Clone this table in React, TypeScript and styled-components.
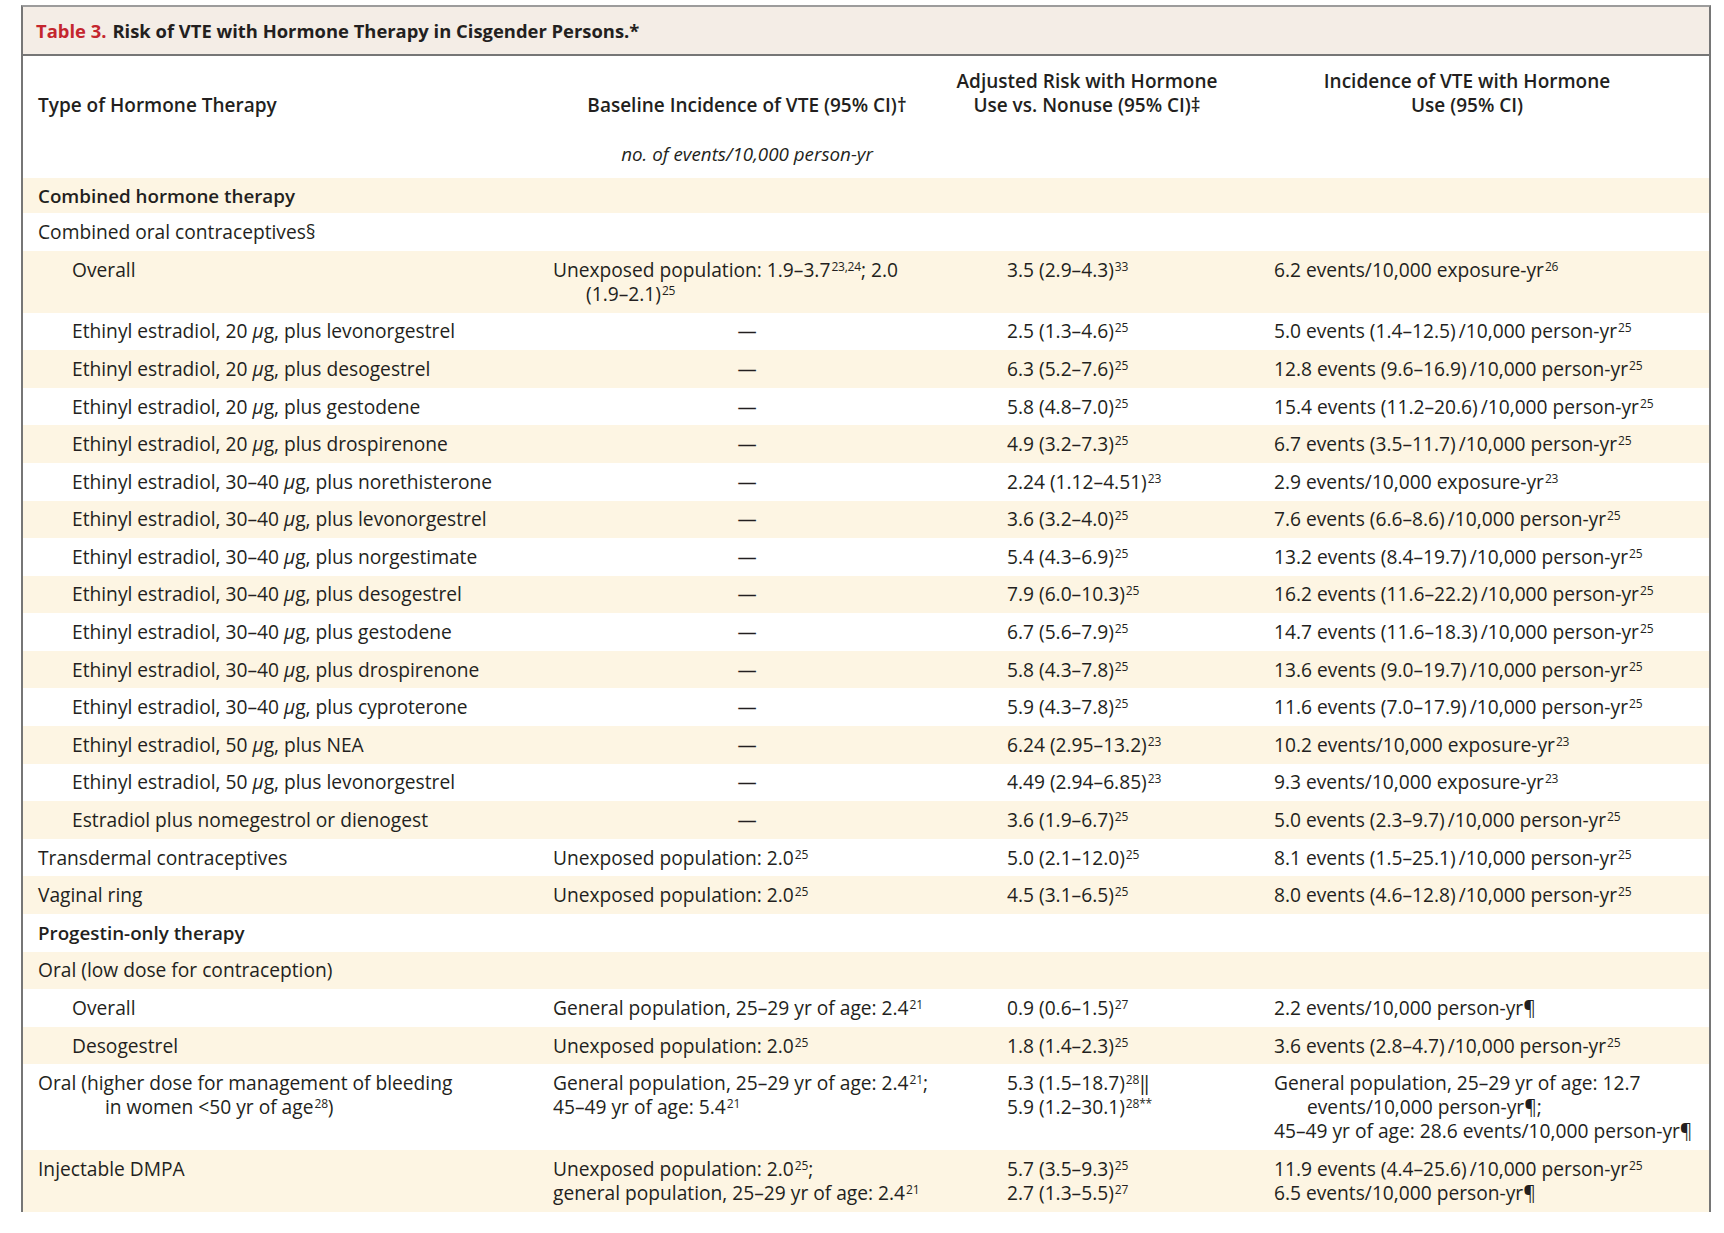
import React from "react";
import styled, { createGlobalStyle } from "styled-components";

const GlobalStyle = createGlobalStyle`
  html, body {
    margin: 0;
    padding: 0;
    background: #ffffff;
  }
  body {
    font-family: "Open Sans", "Noto Sans", "Liberation Sans", sans-serif;
    color: #231f20;
  }
`;

const COLS = "522px 404px 276px 484px";
const INK = "#231f20";

const Page = styled.div`
  padding: 5px 0 0 21px;
`;

const Frame = styled.section`
  width: 1690px;
  box-sizing: border-box;
  border-top: 2px solid #9c9c9c;
  border-left: 2px solid #767676;
  border-right: 2px solid #767676;
`;

const TitleBar = styled.header`
  height: 47px;
  background: #f4ede6;
  border-bottom: 2px solid #767676;
  display: flex;
  align-items: center;
  padding-left: 13px;
  font-size: 18.4px;
  font-weight: 700;
  color: ${INK};
  white-space: nowrap;
`;

const TableNo = styled.span`
  color: #c4262e;
  margin-right: 6px;
`;

const HeaderRow = styled.div`
  display: grid;
  grid-template-columns: ${COLS};
  padding: 12.8px 0 12.4px;
  font-size: 19px;
  font-weight: 600;
  line-height: 24px;
`;

const HeadCell = styled.div<{ $center?: boolean; $bottom?: boolean }>`
  text-align: ${(p) => (p.$center ? "center" : "left")};
  padding-left: ${(p) => (p.$center ? 0 : 15)}px;
  align-self: ${(p) => (p.$bottom ? "end" : "start")};
  white-space: nowrap;
`;

const UnitsRow = styled.div`
  display: grid;
  grid-template-columns: ${COLS};
  padding: 12.4px 0;
  line-height: 24px;
`;

const UnitsCell = styled.div`
  grid-column: 2;
  text-align: center;
  font-style: italic;
  font-size: 18.8px;
`;

const Body = styled.div`
  font-size: 19.2px;
  line-height: 24px;
`;

const Row = styled.div<{ $band: boolean; $compact?: boolean }>`
  display: grid;
  grid-template-columns: ${COLS};
  padding: ${(p) => (p.$compact ? "5.7px 0" : "6.8px 0")};
  background: ${(p) => (p.$band ? "#fdf5e3" : "#ffffff")};
`;

const LabelCell = styled.div<{ $level: number; $bold?: boolean; $hang: number }>`
  padding-left: ${(p) => (p.$level ? 49 : 15) + p.$hang}px;
  text-indent: -${(p) => p.$hang}px;
  font-size: ${(p) => (p.$bold ? "18.8px" : "19.2px")};
  font-weight: ${(p) => (p.$bold ? 600 : 400)};
  white-space: nowrap;
`;

const ValueCell = styled.div<{ $inset: number; $center?: boolean }>`
  padding-left: ${(p) => (p.$center ? 0 : p.$inset)}px;
  text-align: ${(p) => (p.$center ? "center" : "left")};
`;

const Para = styled.div<{ $hang: number }>`
  padding-left: ${(p) => p.$hang}px;
  text-indent: -${(p) => p.$hang}px;
  white-space: nowrap;
`;

const Sup = styled.span`
  font-size: 12px;
  line-height: 0;
  vertical-align: 6px;
  letter-spacing: -0.2px;
  margin-left: 1px;
`;

const Mu = styled.span`
  font-style: italic;
`;

const Slash = styled.span`
  margin-left: 3px;
`;

const s = (n: string) => <Sup>{n}</Sup>;
const mu = <Mu>μ</Mu>;
const sl = <Slash>/</Slash>;

type Cell = React.ReactNode[] | "dash" | undefined;

interface RowData {
  label: React.ReactNode;
  level: 0 | 1;
  bold?: boolean;
  hang?: number;
  compact?: boolean;
  base?: Cell;
  risk?: Cell;
  inc?: Cell;
}

const ee = (dose: string, partner: string) => (
  <>
    Ethinyl estradiol, {dose} {mu}g, plus {partner}
  </>
);

const ev = (n: string, ci: string, sup: string) => (
  <>
    {n} events ({ci}){sl}10,000 person-yr{s(sup)}
  </>
);

const rows: RowData[] = [
  { label: "Combined hormone therapy", level: 0, bold: true, compact: true },
  { label: "Combined oral contraceptives§", level: 0 },
  {
    label: "Overall",
    level: 1,
    base: [
      <>
        Unexposed population: 1.9–3.7{s("23,24")}; 2.0
        <br />
        (1.9–2.1){s("25")}
      </>,
    ],
    risk: [<>3.5 (2.9–4.3){s("33")}</>],
    inc: [<>6.2 events/10,000 exposure-yr{s("26")}</>],
  },
  {
    label: ee("20", "levonorgestrel"),
    level: 1,
    base: "dash",
    risk: [<>2.5 (1.3–4.6){s("25")}</>],
    inc: [ev("5.0", "1.4–12.5", "25")],
  },
  {
    label: ee("20", "desogestrel"),
    level: 1,
    base: "dash",
    risk: [<>6.3 (5.2–7.6){s("25")}</>],
    inc: [ev("12.8", "9.6–16.9", "25")],
  },
  {
    label: ee("20", "gestodene"),
    level: 1,
    base: "dash",
    risk: [<>5.8 (4.8–7.0){s("25")}</>],
    inc: [ev("15.4", "11.2–20.6", "25")],
  },
  {
    label: ee("20", "drospirenone"),
    level: 1,
    base: "dash",
    risk: [<>4.9 (3.2–7.3){s("25")}</>],
    inc: [ev("6.7", "3.5–11.7", "25")],
  },
  {
    label: ee("30–40", "norethisterone"),
    level: 1,
    base: "dash",
    risk: [<>2.24 (1.12–4.51){s("23")}</>],
    inc: [<>2.9 events/10,000 exposure-yr{s("23")}</>],
  },
  {
    label: ee("30–40", "levonorgestrel"),
    level: 1,
    base: "dash",
    risk: [<>3.6 (3.2–4.0){s("25")}</>],
    inc: [ev("7.6", "6.6–8.6", "25")],
  },
  {
    label: ee("30–40", "norgestimate"),
    level: 1,
    base: "dash",
    risk: [<>5.4 (4.3–6.9){s("25")}</>],
    inc: [ev("13.2", "8.4–19.7", "25")],
  },
  {
    label: ee("30–40", "desogestrel"),
    level: 1,
    base: "dash",
    risk: [<>7.9 (6.0–10.3){s("25")}</>],
    inc: [ev("16.2", "11.6–22.2", "25")],
  },
  {
    label: ee("30–40", "gestodene"),
    level: 1,
    base: "dash",
    risk: [<>6.7 (5.6–7.9){s("25")}</>],
    inc: [ev("14.7", "11.6–18.3", "25")],
  },
  {
    label: ee("30–40", "drospirenone"),
    level: 1,
    base: "dash",
    risk: [<>5.8 (4.3–7.8){s("25")}</>],
    inc: [ev("13.6", "9.0–19.7", "25")],
  },
  {
    label: ee("30–40", "cyproterone"),
    level: 1,
    base: "dash",
    risk: [<>5.9 (4.3–7.8){s("25")}</>],
    inc: [ev("11.6", "7.0–17.9", "25")],
  },
  {
    label: ee("50", "NEA"),
    level: 1,
    base: "dash",
    risk: [<>6.24 (2.95–13.2){s("23")}</>],
    inc: [<>10.2 events/10,000 exposure-yr{s("23")}</>],
  },
  {
    label: ee("50", "levonorgestrel"),
    level: 1,
    base: "dash",
    risk: [<>4.49 (2.94–6.85){s("23")}</>],
    inc: [<>9.3 events/10,000 exposure-yr{s("23")}</>],
  },
  {
    label: "Estradiol plus nomegestrol or dienogest",
    level: 1,
    base: "dash",
    risk: [<>3.6 (1.9–6.7){s("25")}</>],
    inc: [ev("5.0", "2.3–9.7", "25")],
  },
  {
    label: "Transdermal contraceptives",
    level: 0,
    base: [<>Unexposed population: 2.0{s("25")}</>],
    risk: [<>5.0 (2.1–12.0){s("25")}</>],
    inc: [ev("8.1", "1.5–25.1", "25")],
  },
  {
    label: "Vaginal ring",
    level: 0,
    base: [<>Unexposed population: 2.0{s("25")}</>],
    risk: [<>4.5 (3.1–6.5){s("25")}</>],
    inc: [ev("8.0", "4.6–12.8", "25")],
  },
  { label: "Progestin-only therapy", level: 0, bold: true },
  { label: "Oral (low dose for contraception)", level: 0 },
  {
    label: "Overall",
    level: 1,
    base: [<>General population, 25–29 yr of age: 2.4{s("21")}</>],
    risk: [<>0.9 (0.6–1.5){s("27")}</>],
    inc: [<>2.2 events/10,000 person-yr¶</>],
  },
  {
    label: "Desogestrel",
    level: 1,
    base: [<>Unexposed population: 2.0{s("25")}</>],
    risk: [<>1.8 (1.4–2.3){s("25")}</>],
    inc: [ev("3.6", "2.8–4.7", "25")],
  },
  {
    label: (
      <>
        Oral (higher dose for management of bleeding
        <br />
        in women &lt;50 yr of age{s("28")})
      </>
    ),
    level: 0,
    hang: 67,
    base: [
      <>General population, 25–29 yr of age: 2.4{s("21")};</>,
      <>45–49 yr of age: 5.4{s("21")}</>,
    ],
    risk: [<>5.3 (1.5–18.7){s("28")}‖</>, <>5.9 (1.2–30.1){s("28**")}</>],
    inc: [
      <>
        General population, 25–29 yr of age: 12.7
        <br />
        events/10,000 person-yr¶;
      </>,
      <>45–49 yr of age: 28.6 events/10,000 person-yr¶</>,
    ],
  },
  {
    label: "Injectable DMPA",
    level: 0,
    base: [
      <>Unexposed population: 2.0{s("25")};</>,
      <>general population, 25–29 yr of age: 2.4{s("21")}</>,
    ],
    risk: [<>5.7 (3.5–9.3){s("25")}</>, <>2.7 (1.3–5.5){s("27")}</>],
    inc: [ev("11.9", "4.4–25.6", "25"), <>6.5 events/10,000 person-yr¶</>],
  },
];

function Value({ cell, inset, hang }: { cell: Cell; inset: number; hang: number }) {
  if (cell === "dash") {
    return (
      <ValueCell $inset={inset} $center>
        —
      </ValueCell>
    );
  }
  return (
    <ValueCell $inset={inset}>
      {(cell ?? []).map((p, i) => (
        <Para key={i} $hang={hang}>
          {p}
        </Para>
      ))}
    </ValueCell>
  );
}

export default function App() {
  return (
    <Page>
      <GlobalStyle />
      <Frame>
        <TitleBar>
          <TableNo>Table 3.</TableNo>
          Risk of VTE with Hormone Therapy in Cisgender Persons.*
        </TitleBar>
        <HeaderRow>
          <HeadCell $bottom>Type of Hormone Therapy</HeadCell>
          <HeadCell $center $bottom>
            Baseline Incidence of VTE (95% CI)†
          </HeadCell>
          <HeadCell $center>
            Adjusted Risk with Hormone
            <br />
            Use vs. Nonuse (95% CI)‡
          </HeadCell>
          <HeadCell $center>
            Incidence of VTE with Hormone
            <br />
            Use (95% CI)
          </HeadCell>
        </HeaderRow>
        <UnitsRow>
          <UnitsCell>no. of events/10,000 person-yr</UnitsCell>
        </UnitsRow>
        <Body>
          {rows.map((r, i) => (
            <Row key={i} $band={i % 2 === 0} $compact={r.compact}>
              <LabelCell $level={r.level} $bold={r.bold} $hang={r.hang ?? 0}>
                {r.label}
              </LabelCell>
              <Value cell={r.base} inset={8} hang={33} />
              <Value cell={r.risk} inset={58} hang={0} />
              <Value cell={r.inc} inset={49} hang={33} />
            </Row>
          ))}
        </Body>
      </Frame>
    </Page>
  );
}
